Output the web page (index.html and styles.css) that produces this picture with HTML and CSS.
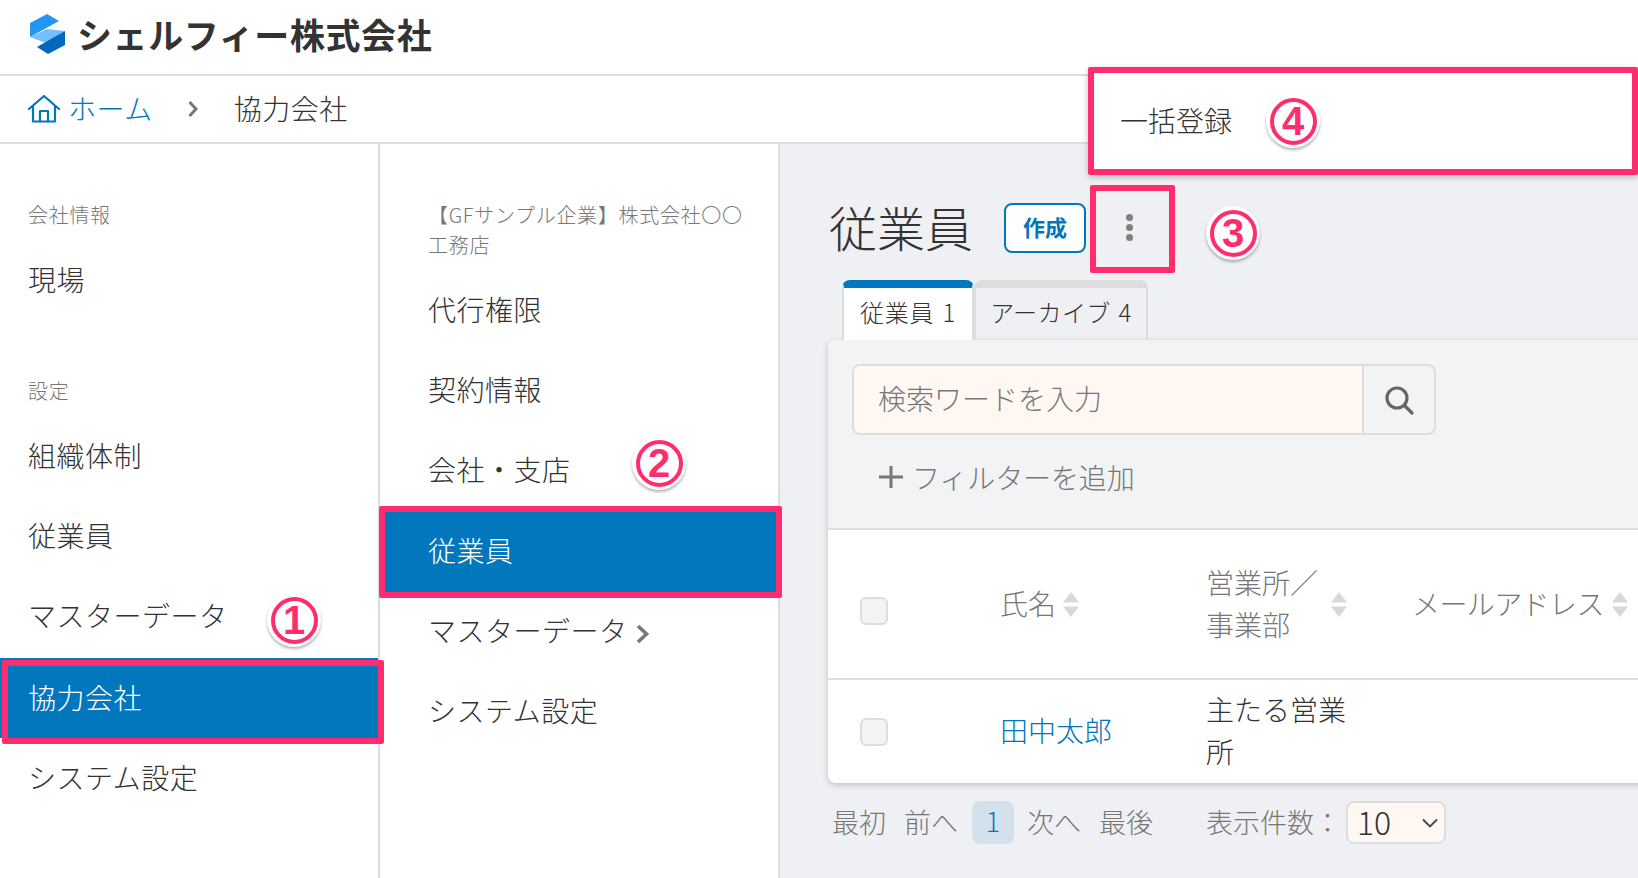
FILE: index.html
```html
<!DOCTYPE html>
<html lang="ja">
<head>
<meta charset="utf-8">
<title>シェルフィー株式会社</title>
<link rel="stylesheet" href="styles.css">
</head>
<body>
<div class="page">
  <header class="topbar">
    <svg class="logo" viewBox="0 0 40 42" width="40" height="42">
      <polygon fill="#2196f3" points="2,10 19,1 31,8 2,24"/>
      <polygon fill="#74c0ff" points="2,24 19,16 37,18 18,30"/>
      <polygon fill="#0268bd" points="37,18 37,32 20,41 9,34"/>
    </svg>
    <span class="brand">シェルフィー株式会社</span>
  </header>
  <nav class="crumbs">
    <svg class="home" viewBox="0 0 32 28" width="32" height="28" fill="none" stroke="#0277bd" stroke-width="2.2" stroke-linejoin="round" stroke-linecap="round">
      <path d="M1 14 16 1l15 13"/>
      <path d="M5 11v15.500h22V11"/>
      <path d="M12 26.500V16h8v10.500"/>
    </svg>
    <a class="crumb-link">ホーム</a>
    <svg class="crumb-sep" viewBox="0 0 10 18" width="10" height="18" fill="none" stroke="#777" stroke-width="3"><path d="M1.500 2l6.500 7-6.500 7"/></svg>
    <span class="crumb-current">協力会社</span>
  </nav>
  <div class="columns">
    <aside class="side">
      <div class="side-label">会社情報</div>
      <div class="side-item">現場</div>
      <div class="side-label">設定</div>
      <div class="side-item">組織体制</div>
      <div class="side-item">従業員</div>
      <div class="side-item">マスターデータ</div>
      <div class="side-item side-active">協力会社</div>
      <div class="side-item">システム設定</div>
    </aside>
    <aside class="sub">
      <div class="sub-label">【GFサンプル企業】株式会社〇〇<br>工務店</div>
      <div class="sub-item">代行権限</div>
      <div class="sub-item">契約情報</div>
      <div class="sub-item">会社・支店</div>
      <div class="sub-item sub-active">従業員</div>
      <div class="sub-item">マスターデータ<svg class="sub-chev" viewBox="0 0 14 20" width="14" height="20" fill="none" stroke="#777" stroke-width="3.600"><path d="M2 2l8.500 8L2 18"/></svg></div>
      <div class="sub-item">システム設定</div>
    </aside>
    <main class="main">
      <div class="title-row">
        <h1 class="title">従業員</h1>
        <button class="create">作成</button>
        <div class="kebab"><i></i><i></i><i></i></div>
      </div>
      <div class="tabs">
        <div class="tab tab-on">従業員 1</div>
        <div class="tab tab-off">アーカイブ 4</div>
      </div>
      <section class="panel">
        <div class="filters">
          <div class="search">
            <div class="search-input">検索ワードを入力</div>
            <div class="search-btn">
              <svg viewBox="0 0 32 32" width="32" height="32" fill="none" stroke="#666" stroke-width="3.200" stroke-linecap="round"><circle cx="14" cy="14" r="10"/><path d="M21.500 21.500 29 29"/></svg>
            </div>
          </div>
          <div class="add-filter">
            <svg viewBox="0 0 24 24" width="24" height="24" stroke="#777" stroke-width="3"><path d="M12 1v22M0 12h24"/></svg>
            <span>フィルターを追加</span>
          </div>
        </div>
        <div class="row row-head">
          <div class="cell-check"><span class="check check-head"></span></div>
          <div class="cell th">氏名<svg class="sort" viewBox="0 0 16 25" width="16" height="25" fill="#d8d8d8"><path d="M8 0l8 10.500H0zM0 14.500h16L8 25z"/></svg></div>
          <div class="cell th"><span class="th-wrap">営業所／<br>事業部</span><svg class="sort" viewBox="0 0 16 25" width="16" height="25" fill="#d8d8d8"><path d="M8 0l8 10.500H0zM0 14.500h16L8 25z"/></svg></div>
          <div class="cell th"><span class="th-mail">メールアドレス</span><svg class="sort" viewBox="0 0 16 25" width="16" height="25" fill="#d8d8d8"><path d="M8 0l8 10.500H0zM0 14.500h16L8 25z"/></svg></div>
        </div>
        <div class="row row-body">
          <div class="cell-check"><span class="check"></span></div>
          <div class="cell"><a class="name">田中太郎</a></div>
          <div class="cell office">主たる営業所</div>
          <div class="cell"></div>
        </div>
      </section>
      <div class="pager">
        <span class="pg pg-first">最初</span>
        <span class="pg pg-prev">前へ</span>
        <span class="pg-now">1</span>
        <span class="pg pg-next">次へ</span>
        <span class="pg pg-last">最後</span>
        <span class="pg pg-count">表示件数：</span>
        <div class="size"><span>10</span><svg viewBox="0 0 16 10" width="16" height="10" fill="none" stroke="#444" stroke-width="1.800"><path d="M1 1.500 8 8.500l7-7"/></svg></div>
      </div>
    </main>
  </div>

  <div class="menu"><span>一括登録</span></div>
  <div class="mark mark-1"></div>
  <div class="mark mark-2"></div>
  <div class="mark mark-3"></div>
  <div class="badge badge-1"><b>1</b></div>
  <div class="badge badge-2"><b>2</b></div>
  <div class="badge badge-3"><b>3</b></div>
  <div class="badge badge-4"><b>4</b></div>
</div>
</body>
</html>
```
FILE: styles.css
```css
* { box-sizing: border-box; }
html, body { margin: 0; padding: 0; }
body {
  font-family: "Noto Sans CJK JP", "Noto Sans", sans-serif;
  font-weight: 300;
  color: #333;
  background: #fff;
}
.page {
  position: relative;
  width: 1638px;
  height: 878px;
  overflow: hidden;
  display: flex;
  flex-direction: column;
}

/* top */
.topbar {
  height: 76px;
  flex: none;
  display: flex;
  align-items: center;
  padding: 0 0 6px 28px;
  border-bottom: 2px solid #ddd;
}
.logo { flex: none; }
.brand {
  margin-left: 9px;
  font-size: 35px;
  font-weight: 700;
  letter-spacing: .6px;
  line-height: 50px;
  color: #333;
}
.crumbs {
  height: 68px;
  flex: none;
  display: flex;
  align-items: center;
  padding-left: 28px;
  border-bottom: 2px solid #ddd;
  font-size: 28px;
  letter-spacing: .5px;
}
.crumbs span, .crumbs a { padding-bottom: 2px; }
.crumb-link { margin-left: 8px; color: #0277bd; }
.crumb-sep { margin-left: 35px; }
.crumb-current { margin-left: 36px; }

/* columns */
.columns { flex: 1; display: flex; min-height: 0; }
.side {
  width: 380px;
  flex: none;
  border-right: 2px solid #ddd;
}
.side-label {
  height: 96px;
  padding: 46px 0 0 28px;
  font-size: 20px;
  letter-spacing: .7px;
  line-height: 50px;
  color: #777;
}
.side-item {
  height: 80px;
  padding-left: 28px;
  font-size: 28px;
  letter-spacing: .5px;
  line-height: 78px;
}
.side-active {
  margin-top: 2px;
  background: #0277bd;
  color: #fff;
}
.sub {
  width: 400px;
  flex: none;
  border-right: 2px solid #ddd;
}
.sub-label {
  height: 125px;
  padding: 56px 0 0 48px;
  font-size: 20px;
  letter-spacing: .7px;
  line-height: 30px;
  color: #777;
}
.sub-item {
  height: 80px;
  padding-left: 48px;
  font-size: 28px;
  letter-spacing: .5px;
  line-height: 80px;
}
.sub-active {
  height: 84px;
  margin: 1px 0 -4px;
  background: #0277bd;
  color: #fff;
}
.sub-chev { margin-left: 8px; vertical-align: -2px; }

/* main */
.main {
  flex: 1;
  min-width: 0;
  background: #eff0f3;
  padding: 59px 0 0 50px;
}
.title-row { display: flex; align-items: center; height: 50px; }
.title {
  margin: 0 0 0 -1px;
  padding-bottom: 5px;
  font-size: 48px;
  font-weight: 300;
  line-height: 50px;
}
.create {
  margin-left: 31px;
  width: 82px;
  height: 50px;
  padding: 0 0 4px;
  border: 2px solid #0277bd;
  border-radius: 8px;
  background: #fff;
  color: #0277bd;
  font: 700 22px "Noto Sans CJK JP", sans-serif;
}
.kebab {
  width: 86px;
  padding-bottom: 2px;
  display: flex;
  flex-direction: column;
  align-items: center;
  gap: 3px;
}
.kebab i {
  width: 7px;
  height: 7px;
  border-radius: 50%;
  background: #808080;
}
.tabs { display: flex; margin: 27px 0 0 12px; height: 60px; }
.tab {
  padding: 0 16px;
  border: 2px solid #ddd;
  border-top: 8px solid #ddd;
  border-bottom: 0;
  border-radius: 8px 8px 0 0;
  font-size: 24px;
  letter-spacing: .8px;
  word-spacing: 2px;
  line-height: 47px;
}
.tab-on {
  background: #fff;
  border-top-color: #0277bd;
}
.tab-off { letter-spacing: .4px; padding: 0 14px; }
.panel {
  margin-left: -2px;
  width: 900px;
  border-radius: 8px;
  box-shadow: 0 2px 6px rgba(0,0,0,.2);
  background: #fff;
}
.filters {
  height: 190px;
  padding: 24px 0 0 24px;
  background: #f2f3f5;
  border-bottom: 2px solid #ddd;
  border-radius: 8px 8px 0 0;
}
.search {
  display: flex;
  width: 584px;
  height: 71px;
  border: 2px solid #ddd;
  border-radius: 8px;
  overflow: hidden;
}
.search-input {
  flex: 1;
  padding-left: 24px;
  background: #fff8f2;
  border-right: 2px solid #ddd;
  font-size: 28px;
  line-height: 64px;
  color: #777;
}
.search-btn {
  width: 70px;
  display: flex;
  align-items: center;
  justify-content: center;
}
.add-filter {
  display: flex;
  align-items: center;
  height: 50px;
  margin: 17px 0 0 27px;
  font-size: 28px;
  color: #777;
}
.add-filter span { margin-left: 9px; letter-spacing: -.1px; }
.row {
  display: grid;
  grid-template-columns: 172px 206px 206px 1fr;
  align-items: center;
}
.row-head { height: 150px; border-bottom: 2px solid #ddd; }
.row-body { height: 103px; }
.cell-check { padding-left: 32px; display: flex; }
.check {
  width: 28px;
  height: 28px;
  background: #f2f3f5;
  border: 2px solid #ddd;
  border-radius: 6px;
}
.check-head { margin-top: 14px; }
.cell { font-size: 28px; line-height: 42px; padding-bottom: 3px; }
.th { display: flex; align-items: center; color: #777; white-space: nowrap; }
.th .sort { margin-top: 3px; }
.sort { flex: none; margin-left: 7px; }
.th-wrap { margin-right: 6px; }
.th-mail { letter-spacing: -.6px; margin-right: 1px; }
.name { color: #0277bd; }
.office { width: 150px; }
.pager {
  display: flex;
  align-items: center;
  height: 43px;
  margin: 18px 0 0 2px;
  font-size: 27px;
  color: #777;
}
.pg { padding-bottom: 3px; }
.pg-prev { margin-left: 18px; }
.pg-now {
  margin-left: 14px;
  width: 42px;
  height: 43px;
  border-radius: 8px;
  background: #d3e1ec;
  color: #0277bd;
  text-align: center;
  line-height: 40px;
}
.pg-next { margin-left: 13px; }
.pg-last { margin-left: 18px; }
.pg-count { margin-left: 53px; }
.size {
  margin-left: 5px;
  width: 100px;
  height: 43px;
  display: flex;
  align-items: center;
  justify-content: space-between;
  padding: 0 6px 0 9px;
  background: #fff8f2;
  border: 2px solid #ddd;
  border-radius: 8px;
  color: #333;
  font-size: 32px;
}
.size span { padding-bottom: 4px; }

/* annotations over the screen */
.menu {
  position: absolute;
  left: 1088px;
  top: 67px;
  width: 550px;
  height: 108px;
  padding: 0 0 2px 26px;
  display: flex;
  align-items: center;
  background: #fff;
  border: 6px solid #ff2d6e;
  border-radius: 2px;
  box-shadow: 0 2px 6px rgba(0,0,0,.25);
  font-size: 28px;
}
.mark {
  position: absolute;
  border: 6px solid #ff2d6e;
  border-radius: 2px;
}
.mark-1 { left: 2px; top: 660px; width: 382px; height: 84px; }
.mark-2 { left: 379px; top: 506px; width: 403px; height: 92px; }
.mark-3 { left: 1090px; top: 185px; width: 85px; height: 88px; }
.badge {
  position: absolute;
  width: 54px;
  height: 54px;
  border-radius: 50%;
  background: #fff;
  box-shadow: 0 2px 3px rgba(0,0,0,.3);
  display: flex;
  align-items: center;
  justify-content: center;
}
.badge b {
  width: 47px;
  height: 47px;
  border: 4px solid #ff2d6e;
  border-radius: 50%;
  color: #ff2d6e;
  font: 700 40px/39px "Liberation Sans", sans-serif;
  text-align: center;
}
.badge-1 { left: 267px; top: 593px; }
.badge-2 { left: 632px; top: 436px; }
.badge-3 { left: 1206px; top: 206px; }
.badge-4 { left: 1266px; top: 94px; }
```
